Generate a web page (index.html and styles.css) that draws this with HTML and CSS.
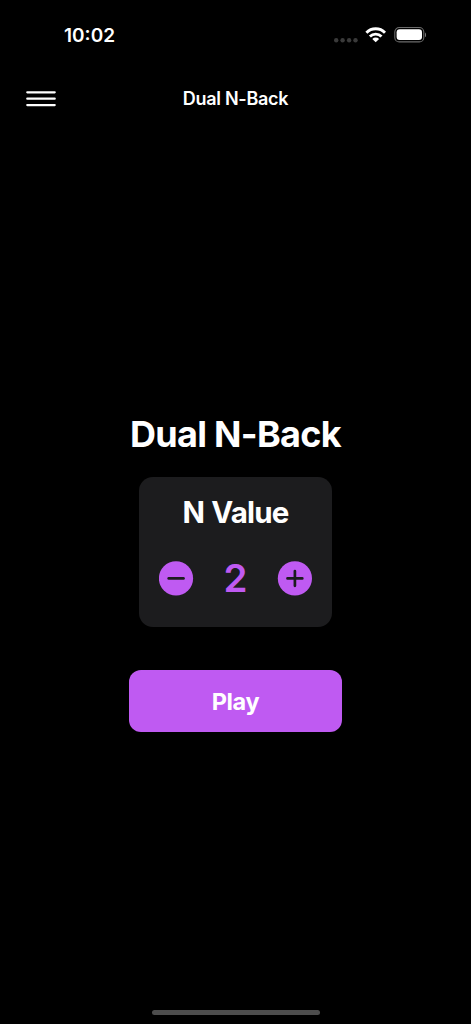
FILE: index.html
```html
<!DOCTYPE html>
<html lang="en">
<head>
<meta charset="utf-8">
<title>Dual N-Back</title>
<link rel="stylesheet" href="styles.css">
</head>
<body>
<div class="screen">
  <div class="status">
    <span class="time">10:02</span>
    <svg class="indicators" width="98" height="20" viewBox="-2 0 98 20">
      <g fill="#3a3a3a"><circle cx="6.2" cy="15.2" r="2.2"/><circle cx="12.6" cy="15.2" r="2.2"/><circle cx="19.1" cy="15.2" r="2.2"/><circle cx="25.5" cy="15.2" r="2.2"/></g>
      <g fill="none" stroke="#fff" stroke-width="2.9">
        <path d="M36.4 7.7a13 13 0 0 1 18.6 0"/>
        <path d="M39.9 11.5a8.3 8.3 0 0 1 11.6 0"/>
      </g>
      <path fill="#fff" d="M42.3 13.9a4.8 4.8 0 0 1 6.8 0l-3.4 3.4z"/>
      <rect x="64.8" y="2.5" width="29" height="14.4" rx="4.5" fill="none" stroke="#6b6b6b" stroke-width="1.1"/>
      <rect x="66.6" y="4.3" width="25.4" height="10.8" rx="3" fill="#fff"/>
      <path fill="#777" d="M95 7.5c1.8.8 1.8 3.8 0 4.6z"/>
    </svg>
  </div>
  <header class="nav">
    <svg class="menu" width="30" height="16" viewBox="0 0 30 16"><path d="M1.3 1.3h27.4M1.3 7.7h27.4M1.3 14.1h27.4"/></svg>
    <span class="nav-title">Dual N-Back</span>
  </header>
  <main class="content">
    <h1 class="title">Dual N-Back</h1>
    <section class="card">
      <h2 class="label">N Value</h2>
      <div class="stepper">
        <svg class="step" width="35" height="35" viewBox="0 0 35 35"><circle cx="17" cy="17.4" r="17.1"/><path d="M9.7 17.4h14.8"/></svg>
        <span class="value">2</span>
        <svg class="step" width="35" height="35" viewBox="0 0 35 35"><circle cx="17.9" cy="17.4" r="17.1"/><path d="M10.5 17.4h14.8M17.9 10v14.8"/></svg>
      </div>
    </section>
    <div class="play"><span class="play-text">Play</span></div>
  </main>
  <div class="home"></div>
</div>
</body>
</html>
```
FILE: styles.css
```css
body {
  margin: 0;
  background: #000;
  color: #fff;
  font-family: Inter, "Liberation Sans", sans-serif;
}
.screen {
  height: 1024px;
  display: flex;
  flex-direction: column;
  align-items: center;
  overflow: hidden;
}
.status {
  width: 100%;
  height: 70px;
  box-sizing: border-box;
  padding: 25px 45px 0 64px;
  display: flex;
  justify-content: space-between;
  align-items: flex-start;
}
.time {
  font-size: 19px;
  font-weight: 600;
  line-height: 21px;
}
.nav {
  width: 100%;
  height: 58px;
  box-sizing: border-box;
  padding: 0 26px;
  display: grid;
  grid-template-columns: 30px 1fr 30px;
  align-items: center;
}
.menu {
  fill: none;
  stroke: #fff;
  stroke-width: 2.3;
  stroke-linecap: round;
}
.nav-title {
  padding-bottom: 1px;
  text-align: center;
  font-size: 18px;
  font-weight: 600;
  letter-spacing: -0.3px;
}
.content {
  flex: 1;
  padding-top: 284px;
  display: flex;
  flex-direction: column;
  align-items: center;
}
.title {
  margin: 0 0 21px;
  font-size: 36px;
  line-height: 44px;
  font-weight: 650;
  letter-spacing: -0.7px;
  white-space: nowrap;
}
.card {
  width: 193px;
  height: 150px;
  box-sizing: border-box;
  padding: 17px 20px 0;
  border-radius: 14px;
  background: #1c1c1e;
}
.label {
  margin: 0;
  text-align: center;
  font-size: 29.5px;
  line-height: 36px;
  font-weight: 650;
  letter-spacing: -0.8px;
  word-spacing: 1px;
  white-space: nowrap;
}
.stepper {
  margin-top: 24px;
  height: 48px;
  display: flex;
  align-items: center;
  justify-content: space-between;
}
.step {
  fill: #bf5af2;
  stroke-linecap: round;
}
.step path {
  fill: none;
  stroke: #1c1c1e;
  stroke-width: 2.7;
}
.value {
  color: #bf5af2;
  font-size: 38.5px;
  font-weight: 600;
}
.play {
  width: 213px;
  height: 62px;
  margin-top: 43px;
  border-radius: 12px;
  background: #bf5af2;
  display: flex;
  align-items: center;
  justify-content: center;
}
.play-text {
  font-size: 23.5px;
  font-weight: 650;
  letter-spacing: -0.4px;
}
.home {
  width: 168px;
  height: 5.4px;
  margin-bottom: 9px;
  border-radius: 3px;
  background: #4d4d4d;
}
```
